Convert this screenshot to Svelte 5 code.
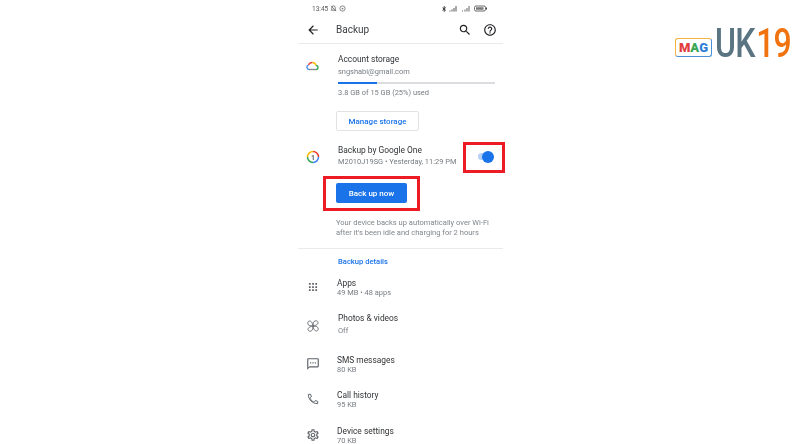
<script>
	const rows = [
		{ title: 'Apps', sub: '49 MB • 48 apps', icon: 'apps', kind: 'short' },
		{ title: 'Photos & videos', sub: 'Off', icon: 'photos', kind: 'tall' },
		{ title: 'SMS messages', sub: '80 KB', icon: 'sms', kind: 'short' },
		{ title: 'Call history', sub: '95 KB', icon: 'call', kind: '' },
		{ title: 'Device settings', sub: '70 KB', icon: 'settings', kind: '' }
	];
</script>

<style>
	:global(body) {
		background: #fff;
	}

	.page {
		position: relative;
		display: flex;
		width: 800px;
		height: 444px;
		overflow: hidden;
		background: #fff;
		font-family: Roboto, 'Liberation Sans', sans-serif;
	}

	.phone {
		width: 205px;
		margin-left: 298px;
		flex: none;
		filter: blur(0.3px);
		color: #3c4043;
	}

	.status {
		display: flex;
		align-items: center;
		height: 15px;
		padding: 1px 15px 0 14px;
		font-size: 6.5px;
		color: #555;
	}

	.status svg {
		display: block;
		margin-left: 2px;
	}

	.spacer {
		flex: 1;
	}

	.toolbar {
		display: flex;
		align-items: center;
		height: 27px;
		padding: 0 6px 0 8px;
		border-bottom: 1px solid #e8eaed;
	}

	.toolbar h1 {
		margin: 0 0 0 16px;
		font-size: 10px;
		font-weight: 400;
		color: #3c4043;
	}

	.toolbar .search {
		margin-right: 11px;
	}

	.section {
		display: flex;
	}

	.lead {
		width: 40px;
		flex: none;
		display: flex;
		justify-content: center;
		padding-right: 11px;
		box-sizing: border-box;
	}

	.body {
		flex: 1;
		min-width: 0;
	}

	.title {
		font-size: 8.4px;
		line-height: 11px;
		color: #303336;
	}

	.sub {
		font-size: 7.45px;
		line-height: 11px;
		color: #777c81;
	}

	.account {
		padding-top: 10px;
		height: 91px;
	}

	.account .lead {
		padding-top: 7px;
	}

	.account .title {
		margin-bottom: 1px;
	}

	.meter {
		width: 157px;
		height: 2px;
		margin: 5px 0 3px;
		background: #dadce0;
	}

	.meter div {
		height: 100%;
		background: #1a73e8;
	}

	.outline {
		display: flex;
		align-items: center;
		justify-content: center;
		width: 83px;
		height: 20px;
		margin: 13px 0 0 -2px;
		border: 1px solid #e0e2e5;
		border-radius: 2px;
		box-sizing: border-box;
		font-size: 8px;
		font-weight: 500;
		color: #1a73e8;
	}

	.one {
		height: 38px;
	}

	.one .lead {
		padding-top: 5px;
	}

	.one .body {
		display: flex;
		align-items: flex-start;
		justify-content: space-between;
	}

	.toggle {
		position: relative;
		width: 15px;
		height: 7px;
		margin: 8px 10px 0 0;
		border-radius: 4px;
		background: #b5d0f5;
	}

	.toggle i {
		position: absolute;
		right: -1px;
		top: -2.5px;
		width: 12px;
		height: 12px;
		border-radius: 50%;
		background: #1a73e8;
	}

	.primary {
		display: flex;
		align-items: center;
		justify-content: center;
		width: 71px;
		height: 20px;
		margin: 0 0 0 38px;
		border-radius: 2px;
		background: #1a73e8;
		font-size: 8px;
		font-weight: 500;
		color: #fff;
	}

	.note {
		margin: 15px 0 0 38px;
		font-size: 7.55px;
		line-height: 10px;
		color: #80868b;
	}

	.rule {
		height: 1px;
		margin-top: 10px;
		background: #e8eaed;
	}

	.details {
		margin: 7px 0 0 40px;
		font-size: 7.6px;
		line-height: 11px;
		font-weight: 500;
		color: #1a73e8;
	}

	.list {
		display: flex;
		flex-direction: column;
		margin-top: 11px;
	}

	.row {
		display: flex;
		height: 36px;
	}

	.row.short {
		height: 35px;
	}

	.row .lead {
		padding: 2px 11px 0 0;
	}

	.row .title {
		margin-left: -1px;
		line-height: 10px;
	}

	.row .sub {
		margin-left: -1px;
		line-height: 9px;
	}

	.row.tall {
		height: 42px;
	}

	.row.tall .lead {
		padding-top: 6px;
	}

	.row.tall .title,
	.row.tall .sub {
		margin-left: 0;
	}

	.row.tall .title {
		margin-top: -1px;
		line-height: 12px;
	}

	.row.tall .sub {
		line-height: 14px;
	}

	.mark {
		position: absolute;
		box-sizing: border-box;
		border: 3px solid #ed1c24;
	}

	.mark.a {
		left: 463px;
		top: 142px;
		width: 42px;
		height: 31px;
	}

	.mark.b {
		left: 323px;
		top: 176px;
		width: 97px;
		height: 35px;
	}

	.logo {
		position: absolute;
		left: 675px;
		top: 24px;
		display: flex;
		align-items: center;
		height: 38px;
		font-family: Roboto, sans-serif;
	}

	.mag {
		display: flex;
		align-items: center;
		justify-content: center;
		width: 37px;
		height: 19px;
		margin-top: 8px;
		border: 1px solid #f2b544;
		border-right-color: #4a90d9;
		border-bottom-color: #4a90d9;
		border-radius: 3px;
		box-sizing: border-box;
		font-size: 13px;
		line-height: 1;
	}

	.mag b:nth-child(1) { color: #e23d3d; font-weight: 900; }
	.mag b:nth-child(2) { color: #3aa757; font-weight: 900; }
	.mag b:nth-child(3) { color: #2f7fd8; font-weight: 900; }

	.word {
		margin-left: 3px;
		font-size: 41px;
		font-weight: 500;
		line-height: 38px;
		letter-spacing: -1px;
		white-space: nowrap;
		color: #5b7482;
		transform: scaleX(0.78);
		transform-origin: left center;
	}

	.word em {
		margin-left: 2px;
		font-style: normal;
		color: #f0730f;
	}
</style>

<div class="page">
	<div class="phone">
		<div class="status">
			<span>13:45</span>
			<svg width="7" height="7" viewBox="0 0 24 24"><path d="M12 3a6 6 0 0 0-6 6v6l-2 3h16l-2-3V9a6 6 0 0 0-6-6zM4 3l16 18" fill="none" stroke="#555" stroke-width="2.500"/></svg>
			<svg width="7" height="7" viewBox="0 0 24 24"><circle cx="12" cy="12" r="9" fill="none" stroke="#777" stroke-width="3"/><circle cx="12" cy="12" r="3" fill="#777"/></svg>
			<div class="spacer"></div>
			<svg width="6" height="8" viewBox="0 0 24 24"><path d="M6 7l12 10-6 5V2l6 5L6 17" fill="none" stroke="#333" stroke-width="3.500"/></svg>
			<svg width="10" height="7" viewBox="0 0 20 14"><path d="M1 11h2v2H1zM5 9h2v4H5zM9 6h2v7H9zM13 2h2v11h-2z" fill="#555"/></svg>
			<svg width="11" height="7" viewBox="0 0 22 14"><path d="M2 11h2v2H2zM7 9h2v4H7zM11 6h2v7h-2zM15 2h2v11h-2z" fill="#666"/></svg>
			<svg width="14" height="7" viewBox="0 0 28 14"><rect x="1" y="2" width="22" height="10" rx="3" fill="none" stroke="#444" stroke-width="1.600"/><rect x="4" y="4.500" width="15" height="5" fill="#777"/><rect x="24" y="5" width="2" height="4" fill="#444"/></svg>
		</div>

		<div class="toolbar">
			<svg width="14" height="14" viewBox="0 0 24 24"><path d="M20 11H7.830l5.590-5.590L12 4l-8 8 8 8 1.410-1.410L7.830 13H20v-2z" fill="#202124"/></svg>
			<h1>Backup</h1>
			<div class="spacer"></div>
			<svg class="search" width="14" height="14" viewBox="0 0 24 24"><path d="M15.500 14h-.79l-.28-.27C15.410 12.590 16 11.110 16 9.500 16 5.910 13.090 3 9.500 3S3 5.910 3 9.500 5.910 16 9.500 16c1.610 0 3.090-.59 4.230-1.570l.27.28v.79l5 4.990L20.490 19l-4.990-5zm-6 0C7.010 14 5 11.990 5 9.500S7.010 5 9.500 5 14 7.010 14 9.500 11.990 14 9.500 14z" fill="#202124"/></svg>
			<svg width="14" height="14" viewBox="0 0 24 24"><path d="M11 18h2v-2h-2v2zm1-16C6.480 2 2 6.480 2 12s4.480 10 10 10 10-4.480 10-10S17.520 2 12 2zm0 18c-4.410 0-8-3.590-8-8s3.590-8 8-8 8 3.590 8 8-3.590 8-8 8zm0-14c-2.210 0-4 1.790-4 4h2c0-1.100.9-2 2-2s2 .9 2 2c0 2-3 1.750-3 5h2c0-2.250 3-2.500 3-5 0-2.210-1.790-4-4-4z" fill="#202124"/></svg>
		</div>

		<div class="section account">
			<div class="lead">
				<svg width="13" height="10" viewBox="0 0 26 20">
					<path d="M6 17a4.500 4.500 0 0 1-1-8.800" fill="none" stroke="#4285f4" stroke-width="2.600"/>
					<path d="M5 8.200A8 8 0 0 1 13 3" fill="none" stroke="#ea4335" stroke-width="2.600"/>
					<path d="M13 3a8 8 0 0 1 7 6" fill="none" stroke="#fbbc04" stroke-width="2.600"/>
					<path d="M20 9a4 4 0 0 1 0 8" fill="none" stroke="#34a853" stroke-width="2.600"/>
					<path d="M6 17h14" fill="none" stroke="#80868b" stroke-width="2.600"/>
				</svg>
			</div>
			<div class="body">
				<div class="title">Account storage</div>
				<div class="sub">sngshabi@gmail.com</div>
				<div class="meter"><div style="width: 25%"></div></div>
				<div class="sub">3.8 GB of 15 GB (25%) used</div>
				<div class="outline">Manage storage</div>
			</div>
		</div>

		<div class="section one">
			<div class="lead">
				<svg width="14" height="14" viewBox="0 0 28 28">
					<path d="M14 3a11 11 0 0 1 11 11" fill="none" stroke="#ea4335" stroke-width="3"/>
					<path d="M25 14a11 11 0 0 1-11 11" fill="none" stroke="#4285f4" stroke-width="3"/>
					<path d="M14 25A11 11 0 0 1 3 14" fill="none" stroke="#34a853" stroke-width="3"/>
					<path d="M3 14A11 11 0 0 1 14 3" fill="none" stroke="#fbbc04" stroke-width="3"/>
					<text x="14" y="19" text-anchor="middle" font-size="14" font-weight="700" fill="#5f6368">1</text>
				</svg>
			</div>
			<div class="body">
				<div>
					<div class="title">Backup by Google One</div>
					<div class="sub">M2010J19SG • Yesterday, 11:29 PM</div>
				</div>
				<div class="toggle"><i></i></div>
			</div>
		</div>

		<div class="primary">Back up now</div>
		<div class="note">Your device backs up automatically over Wi-Fi<br />after it's been idle and charging for 2 hours</div>
		<div class="rule"></div>
		<div class="details">Backup details</div>

		<div class="list">
			{#each rows as row}
				<div class="row {row.kind}">
					<div class="lead">
						<svg width="14" height="14" viewBox="0 0 24 24">
							{#if row.icon === 'apps'}
								<path d="M5 5h3v3H5zM10.500 5h3v3h-3zM16 5h3v3h-3zM5 10.500h3v3H5zM10.500 10.500h3v3h-3zM16 10.500h3v3h-3zM5 16h3v3H5zM10.500 16h3v3h-3zM16 16h3v3h-3z" fill="#5f6368"/>
							{:else if row.icon === 'photos'}
								<path d="M12 12c0-5 1-9 5-9s5 5 1 7-4 2-6 2zM12 12c5 0 9 1 9 5s-5 5-7 1-2-4-2-6zM12 12c0 5-1 9-5 9s-5-5-1-7 4-2 6-2zM12 12c-5 0-9-1-9-5s5-5 7-1 2 4 2 6z" fill="none" stroke="#5f6368" stroke-width="1.500"/>
							{:else if row.icon === 'sms'}
								<path d="M20 2H4c-1.100 0-2 .9-2 2v18l4-4h14c1.100 0 2-.9 2-2V4c0-1.100-.9-2-2-2zm0 14H6l-2 2V4h16v12zM7 9h2v2H7zm4 0h2v2h-2zm4 0h2v2h-2z" fill="#5f6368"/>
							{:else if row.icon === 'call'}
								<path d="M4 4h4l1.200 4.500-2.400 2.400c1.400 2.900 3.400 4.900 6.300 6.300l2.400-2.400 4.500 1.200V20C11 20 4 13 4 4z" fill="none" stroke="#5f6368" stroke-width="1.700" stroke-linejoin="round"/>
							{:else}
								<path d="M19.430 12.980c.04-.32.07-.64.07-.98 0-.34-.03-.66-.07-.98l2.110-1.650c.19-.15.24-.42.12-.64l-2-3.460c-.09-.16-.26-.25-.44-.25-.06 0-.12.01-.17.03l-2.490 1c-.52-.4-1.080-.73-1.690-.98l-.38-2.650C14.460 2.180 14.250 2 14 2h-4c-.25 0-.46.18-.49.42l-.38 2.650c-.61.25-1.170.59-1.690.98l-2.490-1c-.06-.02-.12-.03-.18-.03-.17 0-.34.09-.43.25l-2 3.460c-.13.22-.07.49.12.64l2.110 1.650c-.04.32-.07.65-.07.98 0 .33.03.66.07.98l-2.110 1.650c-.19.15-.24.42-.12.64l2 3.460c.09.16.26.25.44.25.06 0 .12-.01.17-.03l2.490-1c.52.4 1.080.73 1.690.98l.38 2.650c.03.24.24.42.49.42h4c.25 0 .46-.18.49-.42l.38-2.650c.61-.25 1.170-.59 1.690-.98l2.490 1c.06.02.12.03.18.03.17 0 .34-.09.43-.25l2-3.460c.12-.22.07-.49-.12-.64l-2.110-1.650zm-1.980-1.710c.04.31.05.52.05.73 0 .21-.02.43-.05.73l-.14 1.130.89.7 1.080.84-.7 1.210-1.270-.51-1.040-.42-.9.68c-.43.32-.84.56-1.250.73l-1.060.43-.16 1.130-.2 1.350h-1.400l-.19-1.350-.16-1.130-1.060-.43c-.43-.18-.83-.41-1.230-.71l-.91-.7-1.060.43-1.270.51-.7-1.210 1.080-.84.89-.7-.14-1.130c-.03-.31-.05-.54-.05-.74s.02-.43.05-.73l.14-1.130-.89-.7-1.080-.84.7-1.210 1.270.51 1.040.42.9-.68c.43-.32.84-.56 1.250-.73l1.060-.43.16-1.130.2-1.350h1.390l.19 1.350.16 1.130 1.060.43c.43.18.83.41 1.230.71l.91.7 1.060-.43 1.270-.51.7 1.210-1.070.85-.89.7.14 1.130zM12 8c-2.210 0-4 1.790-4 4s1.790 4 4 4 4-1.790 4-4-1.790-4-4-4zm0 6c-1.100 0-2-.9-2-2s.9-2 2-2 2 .9 2 2-.9 2-2 2z" fill="#5f6368"/>
							{/if}
						</svg>
					</div>
					<div class="body">
						<div class="title">{row.title}</div>
						<div class="sub">{row.sub}</div>
					</div>
				</div>
			{/each}
		</div>
	</div>

	<div class="mark a"></div>
	<div class="mark b"></div>

	<div class="logo">
		<div class="mag"><b>M</b><b>A</b><b>G</b></div>
		<div class="word">UK<em>19</em></div>
	</div>
</div>
